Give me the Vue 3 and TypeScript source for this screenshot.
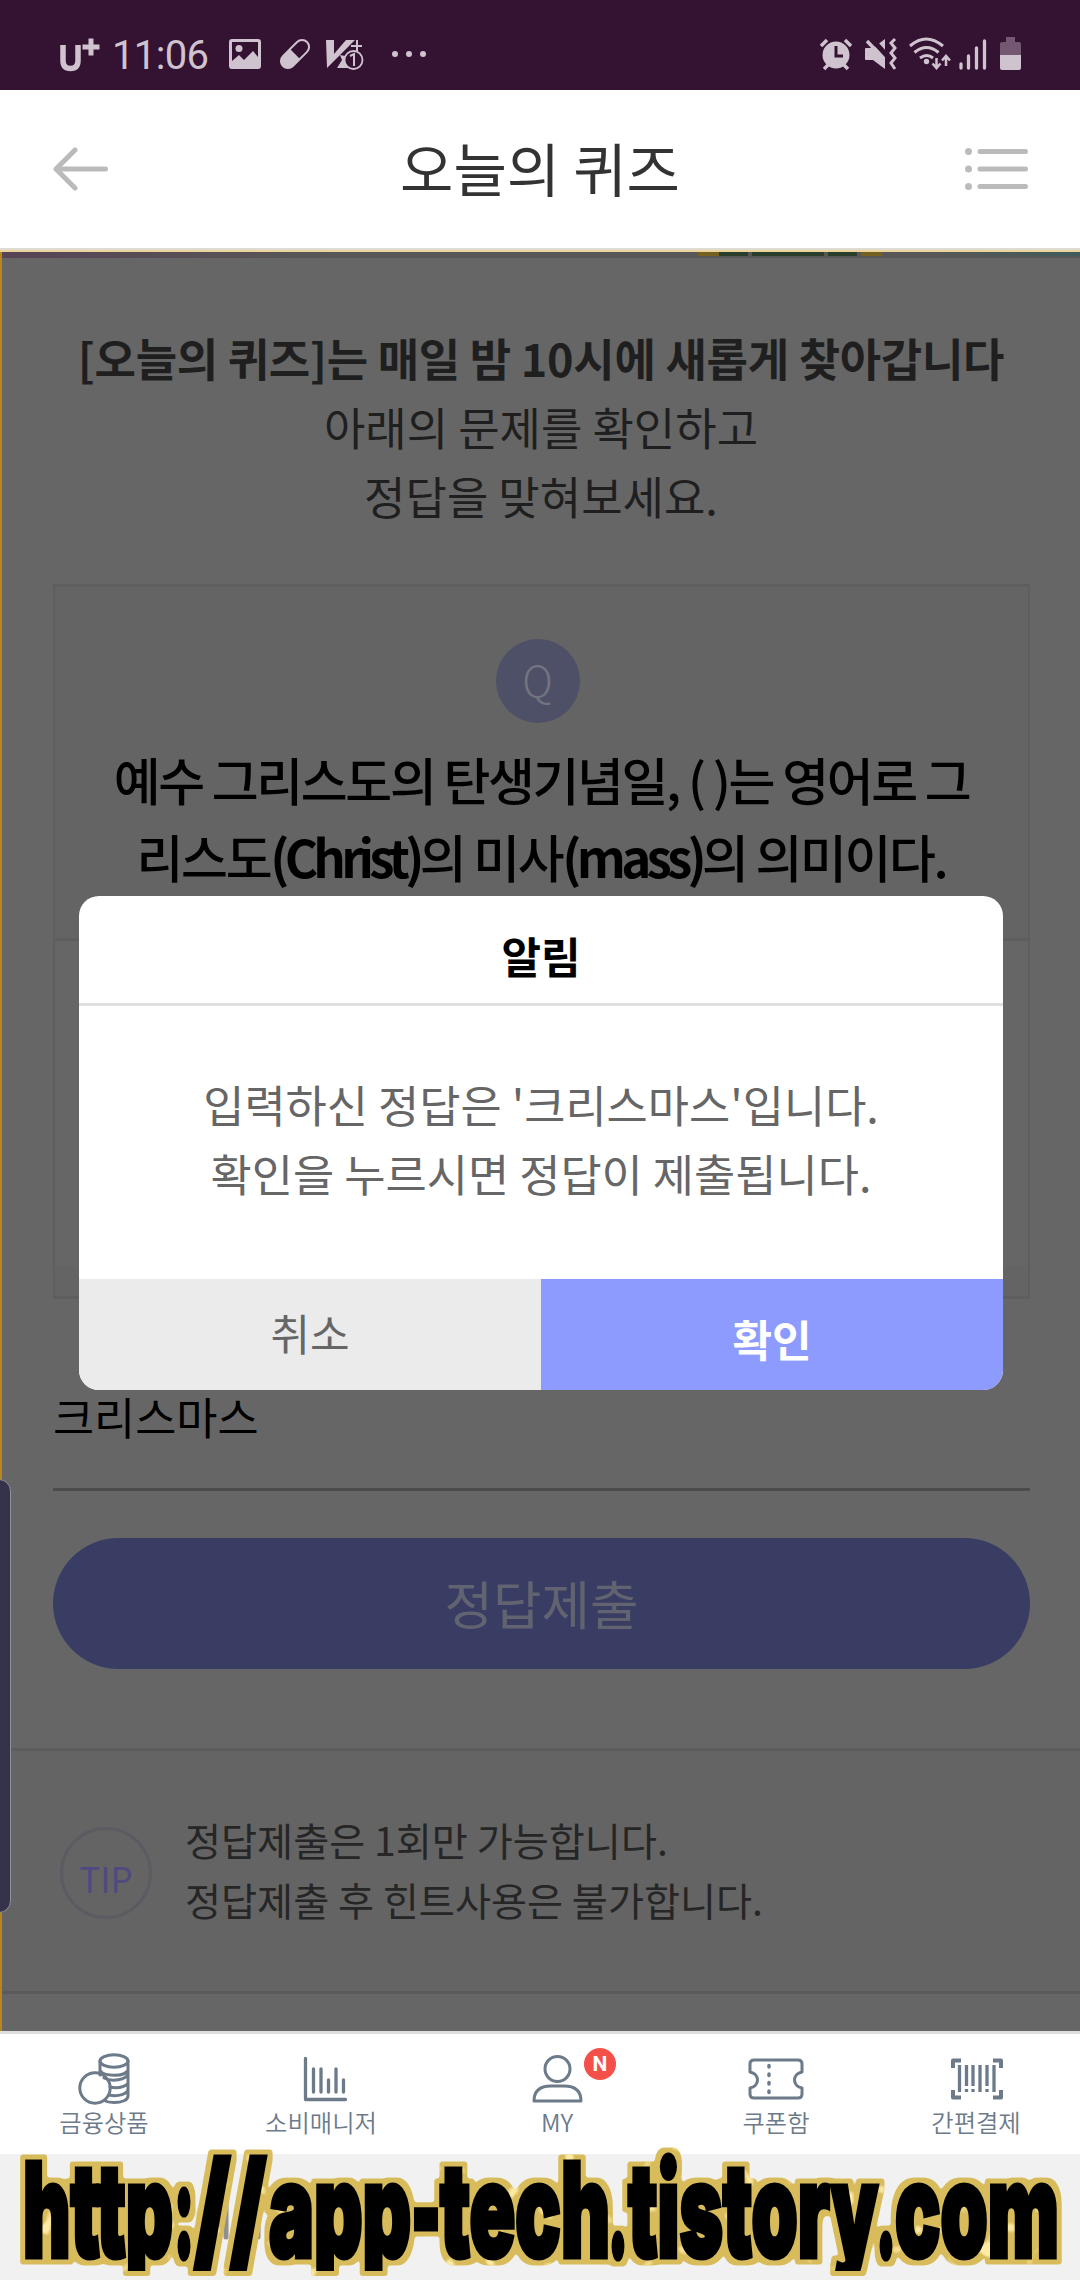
<script setup lang="ts">
const intro = ['아래의 문제를 확인하고', '정답을 맞혀보세요.']
const segments = [
  { t: 'http', x: 23, w: 150 },
  { t: ':', x: 174, w: 20 },
  { t: '//', x: 194, w: 72 },
  { t: 'app', x: 269, w: 142 },
  { t: '-', x: 411, w: 30 },
  { t: 'tech', x: 440, w: 170 },
  { t: '.', x: 608, w: 20 },
  { t: 'tistory', x: 628, w: 250 },
  { t: '.', x: 876, w: 20 },
  { t: 'com', x: 895, w: 164 },
]
</script>

<template>
  <div class="screen">
    <div class="status">
      <svg width="1080" height="90" viewBox="0 0 1080 90" fill="none">
        <g stroke="#cfc3cf">
          <path d="M63 45v15.500q0 8 7.500 8t7.500-8v-15.500" stroke-width="5.500" />
          <path d="M91 38.500v17M82.500 47h17" stroke-width="5" />
        </g>
        <text x="112" y="69" class="clock" textLength="97">11:06</text>
        <g fill="#cfc3cf">
          <path fill-rule="evenodd" d="M232 39h26q3 0 3 3v24q0 3-3 3h-26q-3 0-3-3v-24q0-3 3-3zM232 42v19l7-6 5 5 9-9 5 6v-15z" />
          <circle cx="239" cy="48.500" r="3.500" />
        </g>
        <g transform="rotate(45 295 54)">
          <rect x="288" y="37" width="14" height="34" rx="7" stroke="#cfc3cf" stroke-width="2" />
          <path d="M288 54h14v10a7 7 0 0 1-14 0z" fill="#cfc3cf" />
        </g>
        <path d="M326 40h8v14l12-14h9l-28 28zM337 68l5-8-2-5 5 1 6 12z" fill="#cfc3cf" />
        <path d="M357 40v11M351 46h11" stroke="#cfc3cf" stroke-width="2" />
        <circle cx="353.500" cy="60" r="9" fill="#341231" stroke="#cfc3cf" stroke-width="1.800" />
        <path d="M350 56l4-2v12" stroke="#cfc3cf" stroke-width="2" />
        <g fill="#cfc3cf"><circle cx="395" cy="54" r="3" /><circle cx="409" cy="54" r="3" /><circle cx="423" cy="54" r="3" /></g>
        <g>
          <circle cx="836" cy="55" r="13.500" fill="#cfc3cf" />
          <path d="M821 46l6-6M851 46l-6-6M824 69l4-4M848 69l-4-4" stroke="#cfc3cf" stroke-width="3.500" />
          <path d="M836 46v10h7" stroke="#341231" stroke-width="3" />
        </g>
        <path d="M866 48h7l12-9v30l-12-9h-7q-1 0-1-1v-10q0-1 1-1z" fill="#cfc3cf" />
        <path d="M869 36l20 22" stroke="#341231" stroke-width="5" />
        <path d="M867 41l17 18" stroke="#cfc3cf" stroke-width="3.500" />
        <path d="M895 39l-4 4 4 5-4 5 4 5-4 5 4 6" stroke="#cfc3cf" stroke-width="3" />
        <g stroke="#cfc3cf" stroke-width="3">
          <path d="M910 46q16-14 33 0M914.500 52.500q12-10 24 0M920 58q7-5 13 0" />
          <path d="M936.500 58v10M932.500 63.500l4 4.500 4-4.500M946 66v-10M942 60.500l4-4.500 4 4.500" stroke-width="2.500" />
        </g>
        <circle cx="926.500" cy="61.500" r="2.700" fill="#cfc3cf" />
        <path d="M961 64v4M968.500 56v12M976.500 48v20M984.500 41v27" stroke="#cfc3cf" stroke-width="3.300" stroke-linecap="round" />
        <path d="M1006 37h9v5h4q2 0 2 2v11h-21v-11q0-2 2-2h4z" fill="#745872" />
        <path d="M1000 55h21v13q0 2-2 2h-17q-2 0-2-2z" fill="#cfc3cf" />
      </svg>
    </div>

    <header class="header">
      <svg width="56" height="44" viewBox="0 0 56 44" fill="none" stroke="#bbb" stroke-width="5" stroke-linecap="round" stroke-linejoin="round">
        <path d="M22 3L3 22l19 19M3 22h49.500" />
      </svg>
      <h1>오늘의 퀴즈</h1>
      <svg width="64" height="44" viewBox="0 0 64 44" fill="none" stroke="#bbb" stroke-width="5" stroke-linecap="round">
        <path d="M16 4.500h45.500M16 22h45.500M16 39.500h45.500" />
        <g fill="#bbb" stroke="none"><circle cx="4.500" cy="4.500" r="3.500" /><circle cx="4.500" cy="22" r="3.500" /><circle cx="4.500" cy="39.500" r="3.500" /></g>
      </svg>
    </header>

    <main class="page">
      <div class="banner"><i class="gold"></i><i class="green"></i><i class="green wide"></i><i class="green"></i><i class="gold"></i><i class="teal"></i></div>
      <div class="intro">
        <p class="strong">[오늘의 퀴즈]는 매일 밤 10시에 새롭게 찾아갑니다</p>
        <p v-for="l in intro" :key="l">{{ l }}</p>
      </div>
      <section class="card">
        <div class="question">
          <span class="q">Q</span>
          <p>예수 그리스도의 탄생기념일, ( )는 영어로 그<br />리스도<b>(Christ)</b>의 미사<b>(mass)</b>의 의미이다.</p>
        </div>
        <div class="hint"></div>
      </section>
      <div class="answer">크리스마스</div>
      <div class="submit">정답제출</div>
      <section class="tip">
        <span class="tipmark">TIP</span>
        <div class="tiptext">
          <p>정답제출은 1회만 가능합니다.</p>
          <p>정답제출 후 힌트사용은 불가합니다.</p>
        </div>
      </section>
      <div class="edge"></div>
    </main>

    <nav class="nav">
      <div class="item" style="width: 208px">
        <svg width="52" height="54" viewBox="0 0 52 54">
          <ellipse cx="36" cy="9" rx="14" ry="6.200" />
          <path d="M22 9v14M50 9v35c0 4-6 6.500-14 6.500-5 0-8-1-10-2M22 18c3 7 26 7 28 0M26 26c8 4 22 2 24-4M32 35c9 2 18-1 18-5M31 43c9 2 19-1 19-6" />
          <circle cx="17" cy="36" r="15.200" />
        </svg>
        <span>금융상품</span>
      </div>
      <div class="item" style="width: 226px">
        <svg width="54" height="54" viewBox="0 0 54 54">
          <path d="M11.500 6.500v41h40M19.500 17v23M27 17v23M34.500 28v12M42 17v23M49.500 28v12" stroke-width="3.300" />
        </svg>
        <span>소비매니저</span>
      </div>
      <div class="item" style="width: 246px">
        <svg width="54" height="54" viewBox="0 0 54 54">
          <circle cx="27.500" cy="17" r="12.500" />
          <path d="M4 49q0-15 17-15h13q17 0 17 15z" />
        </svg>
        <span>MY</span>
        <b class="badge">N</b>
      </div>
      <div class="item" style="width: 192px">
        <svg width="58" height="54" viewBox="0 0 58 54">
          <path d="M7 8h44q4 0 4 4v8c-10 2-10 14 0 16v6q0 4-4 4h-44q-4 0-4-4v-6c10-2 10-14 0-16v-8q0-4 4-4z" />
          <path d="M22 13.500v1.500M22 22v1.500M22 30.500v1.500M22 39v1.500" stroke-width="3.500" />
        </svg>
        <span>쿠폰함</span>
      </div>
      <div class="item" style="width: 208px">
        <svg width="54" height="54" viewBox="0 0 54 54">
          <path d="M4 16v-7.500h8M52 16v-7.500h-8M4 38v7.500h8M52 38v7.500h-8" stroke-width="4" stroke-linecap="butt" />
          <path d="M10.500 13v27M17.500 13v21M17.500 37v3M24 13v21M24 37v3M31 13v27M38 13v21M38 37v3M45 13v27" stroke-width="3.300" stroke-linecap="butt" />
        </svg>
        <span>간편결제</span>
      </div>
    </nav>
    <div class="sysbar"></div>

    <aside class="panel"></aside>

    <div class="modal">
      <h2>알림</h2>
      <div class="msg"><p>입력하신 정답은 '크리스마스'입니다.</p><p>확인을 누르시면 정답이 제출됩니다.</p></div>
      <div class="buttons"><span class="cancel">취소</span><span class="ok">확인</span></div>
    </div>

    <svg class="mark" width="1080" height="140" viewBox="0 2140 1080 140">
      <defs>
        <clipPath id="stems"><rect x="0" y="2140" width="1080" height="131" /></clipPath>
        <filter id="gold" filterUnits="userSpaceOnUse" x="0" y="2140" width="1080" height="140" color-interpolation-filters="sRGB">
          <feMorphology in="SourceAlpha" operator="dilate" radius="5" result="fat" />
          <feGaussianBlur in="fat" stdDeviation="1.500" />
          <feColorMatrix values="0 0 0 0 0  0 0 0 0 0  0 0 0 0 0  0 0 0 4 -1.500" result="edge" />
          <feFlood flood-color="#d8bc5c" />
          <feComposite in2="edge" operator="in" result="rim" />
          <feTurbulence type="fractalNoise" baseFrequency="0.050" numOctaves="1" seed="7" />
          <feColorMatrix values="0 0 0 0 1  0 0 0 0 .92  0 0 0 0 .64  14 0 0 0 -9.200" />
          <feComposite in2="edge" operator="in" result="glints" />
          <feMerge><feMergeNode in="rim" /><feMergeNode in="glints" /><feMergeNode in="SourceGraphic" /></feMerge>
        </filter>
      </defs>
      <path d="M226 2203v34M258 2203v34" stroke="#8f8f8f" stroke-width="5" stroke-linecap="round" />
      <g filter="url(#gold)"><g clip-path="url(#stems)"><text v-for="s in segments" :key="s.x" :x="s.x" y="1744.200" :textLength="s.w" lengthAdjust="spacingAndGlyphs" transform="scale(1 1.294)">{{ s.t }}</text></g></g>
    </svg>
  </div>
</template>

<style>
body { margin: 0; }
</style>

<style scoped>
.screen { position: relative; width: 1080px; height: 2280px; overflow: hidden; background: #666; font-family: "Noto Sans CJK KR", sans-serif; display: flex; flex-direction: column; }
p, h1, h2 { margin: 0; font-weight: 400; }
svg { display: block; }
.status { height: 90px; background: #341231; flex: none; }
.clock { font: 400 40px Roboto, sans-serif; fill: #cfc3cf; }
.header { box-sizing: border-box; height: 162px; flex: none; padding: 0 52px 2px 53px; background: #fff; border-bottom: 2px solid #edd49a; box-shadow: inset 0 -2px #dcdcd4; display: flex; align-items: center; justify-content: space-between; }
.header h1 { font-size: 58px; line-height: 84px; color: #333; margin: -4px 0 0 7px; }
.page { position: relative; height: 1779px; flex: none; box-sizing: border-box; border-left: 2px solid #b9851f; display: flex; flex-direction: column; }
.banner { height: 6px; flex: none; display: flex; background: linear-gradient(90deg, #574455, #575757 30%); padding-left: 696px; }
.banner i { height: 4px; }
.gold { width: 21px; background: #766020; }
.green { width: 29px; margin-right: 4px; background: #2b3d2b; }
.green.wide { width: 72px; }
.teal { flex: 1; margin-left: 60px; background: linear-gradient(90deg, #575757, #3f5b5b); }
.intro { margin-top: 65px; text-align: center; font-size: 45px; line-height: 69px; color: #1f1f1f; height: 207px; }
.intro .strong { font-weight: 600; letter-spacing: -0.300px; }
.card { box-sizing: border-box; margin: 54px 50px 0 51px; height: 715px; flex: none; border: 2px solid #5e5e5e; border-top-width: 3px; border-bottom-width: 3px; background: #646464; }
.question { box-sizing: border-box; height: 354px; border-bottom: 3px solid #5e5e5e; display: flex; flex-direction: column; align-items: center; padding-top: 52px; }
.q { width: 84px; height: 84px; margin-right: 8px; border-radius: 50%; background: #4d5067; color: #72747f; font-size: 42px; font-weight: 300; line-height: 79px; text-align: center; }
.question p { margin-top: 18px; font-size: 51px; line-height: 77px; letter-spacing: -2.400px; font-weight: 500; color: #000; text-align: center; white-space: nowrap; }
.question b { font-weight: 700; letter-spacing: -4.800px; }
.hint { height: 325px; background: #666; }
.answer { box-sizing: border-box; margin: 85px 50px 0 51px; height: 107px; flex: none; border-bottom: 3px solid #4c4c4c; font-size: 44.700px; line-height: 64px; color: #000; }
.submit { margin: 47px 50px 0 51px; height: 131px; flex: none; border-radius: 66px; background: #393d63; color: #626370; font-size: 52.700px; line-height: 128px; text-align: center; }
.tip { box-sizing: border-box; margin-top: 79px; height: 246px; flex: none; border-top: 3px solid #5d5d5d; border-bottom: 3px solid #5a5a5c; background: #646464; display: flex; align-items: center; font-size: 39.200px; line-height: 60px; color: #262626; }
.tiptext { margin-top: -5px; }
.tipmark { box-sizing: border-box; width: 92px; height: 92px; margin: 4px 33px 0 58px; border: 3px solid #5b5b62; border-radius: 50%; color: #4f4a80; font-size: 35px; line-height: 95px; text-align: center; }
.edge { flex: 1; }
.nav { position: relative; box-sizing: border-box; height: 123px; flex: none; background: #fff; border-top: 3px solid #dedede; display: flex; }
.item { position: relative; display: flex; flex-direction: column; align-items: center; padding-top: 18px; color: #6c7a8a; }
.item svg { fill: none; stroke: #6c7a8a; stroke-width: 3; stroke-linecap: round; stroke-linejoin: round; }
.item span { font-size: 24.300px; line-height: 36px; margin-top: -2px; font-weight: 350; }
.badge { position: absolute; left: 150px; top: 14px; width: 32px; height: 32px; border-radius: 50%; background: #f25048; color: #fff; font: 700 21px/33px Roboto, sans-serif; text-align: center; }
.sysbar { flex: 1; background: #f1f1f1; }
.panel { position: absolute; left: -20px; top: 1479px; width: 31px; height: 434px; box-sizing: border-box; border: 1.500px solid #929292; border-radius: 12px; background: #35324b; }
.modal { position: absolute; left: 79px; top: 896px; width: 924px; height: 494px; border-radius: 20px; overflow: hidden; background: #fff; text-align: center; display: flex; flex-direction: column; }
.modal h2 { box-sizing: border-box; height: 110px; flex: none; padding-top: 26px; border-bottom: 3px solid #dfdfdf; font-size: 43px; line-height: 66px; font-weight: 600; color: #000; }
.msg { height: 273px; flex: none; box-sizing: border-box; padding-top: 63px; font-size: 44.800px; line-height: 69px; color: #666; }
.buttons { height: 111px; flex: none; display: flex; font-size: 43px; }
.buttons span { flex: 1; box-sizing: border-box; line-height: 106px; }
.cancel { background: #ebebeb; color: #666; }
.buttons .ok { background: #8e9bfe; color: #fff; font-weight: 600; padding-top: 7px; line-height: 104px; }
.mark { position: absolute; left: 0; bottom: 0; overflow: visible; }
.mark text { font: 900 101px Inter, sans-serif; fill: #000; stroke: #000; stroke-width: 4px; }
</style>
